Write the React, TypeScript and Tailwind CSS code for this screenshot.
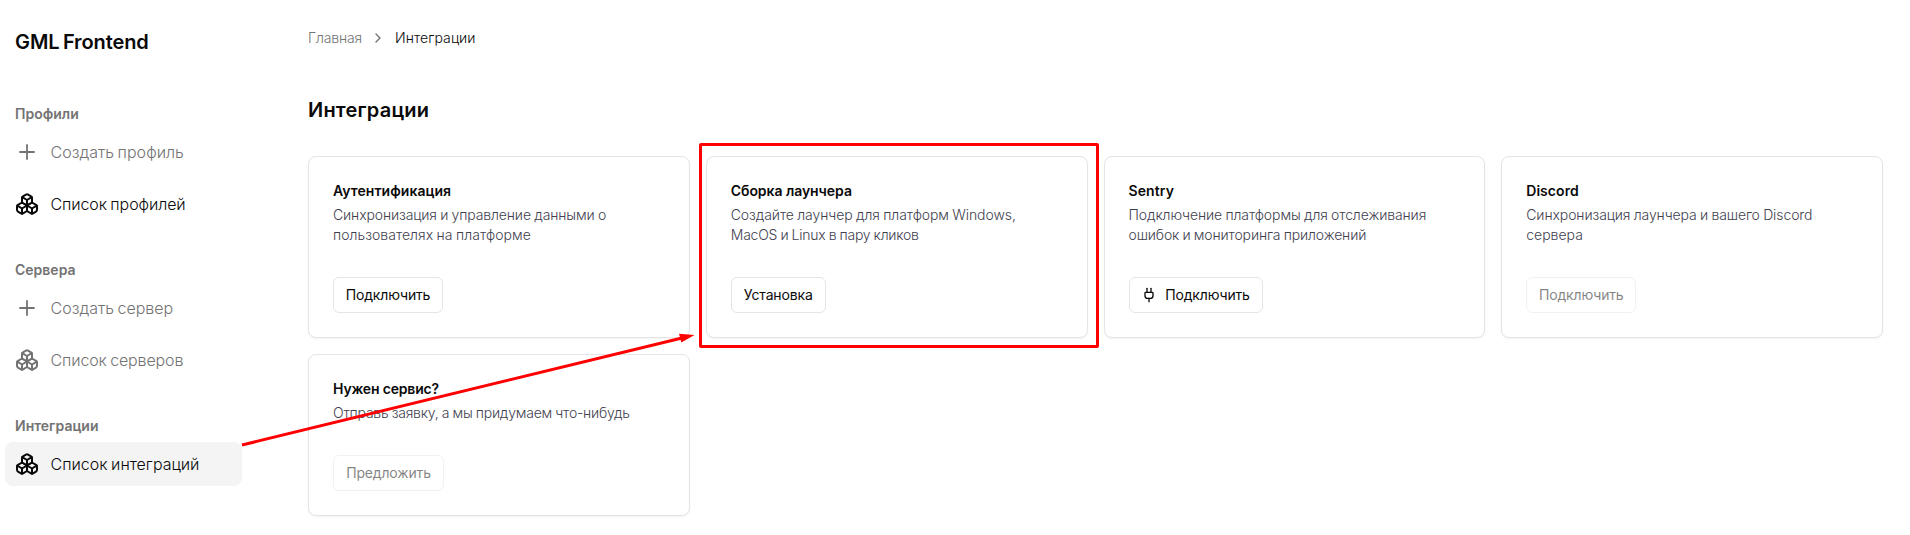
import React from "react";
import { Boxes, ChevronRight, Plug, Plus } from "lucide-react";

type NavItem = { label: string; icon: "plus" | "boxes"; tracking?: string; tone?: "strong" | "muted"; active?: boolean };
type NavGroup = { title: string; items: NavItem[] };

const groups: NavGroup[] = [
  {
    title: "Профили",
    items: [
      { label: "Создать профиль", icon: "plus", tracking: "tracking-[0.02px]" },
      { label: "Список профилей", icon: "boxes", tone: "strong", tracking: "tracking-[-0.1px]" },
    ],
  },
  {
    title: "Сервера",
    items: [
      { label: "Создать сервер", icon: "plus" },
      { label: "Список серверов", icon: "boxes", tracking: "tracking-[-0.13px]" },
    ],
  },
  {
    title: "Интеграции",
    items: [{ label: "Список интеграций", icon: "boxes", tone: "strong", active: true }],
  },
];

type Service = {
  title: string;
  titleClass?: string;
  lines: { text: string; className?: string }[];
  action: string;
  buttonClass: string;
  plug?: boolean;
  disabled?: boolean;
};

const services: Service[] = [
  {
    title: "Аутентификация",
    titleClass: "tracking-[0.05px]",
    lines: [
      { text: "Синхронизация и управление данными о", className: "tracking-[-0.12px]" },
      { text: "пользователях на платформе", className: "tracking-[0.03px]" },
    ],
    action: "Подключить",
    buttonClass: "w-[110px]",
  },
  {
    title: "Сборка лаунчера",
    titleClass: "tracking-[-0.06px]",
    lines: [
      { text: "Создайте лаунчер для платформ Windows,", className: "tracking-[-0.08px]" },
      { text: "MacOS и Linux в пару кликов", className: "tracking-[-0.23px]" },
    ],
    action: "Установка",
    buttonClass: "w-[95px]",
  },
  {
    title: "Sentry",
    titleClass: "tracking-[0.1px]",
    lines: [
      { text: "Подключение платформы для отслеживания", className: "tracking-[-0.11px]" },
      { text: "ошибок и мониторинга приложений", className: "tracking-[-0.14px]" },
    ],
    action: "Подключить",
    buttonClass: "w-[134px]",
    plug: true,
  },
  {
    title: "Discord",
    titleClass: "tracking-[0.05px]",
    lines: [
      { text: "Синхронизация лаунчера и вашего Discord", className: "tracking-[-0.1px]" },
      { text: "сервера" },
    ],
    action: "Подключить",
    buttonClass: "w-[110px]",
    disabled: true,
  },
  {
    title: "Нужен сервис?",
    titleClass: "tracking-[-0.17px]",
    lines: [{ text: "Отправь заявку, а мы придумаем что-нибудь", className: "tracking-[-0.21px]" }],
    action: "Предложить",
    buttonClass: "w-[111px]",
    disabled: true,
  },
];

function SidebarItem({ item }: { item: NavItem }) {
  const Icon = item.icon === "plus" ? Plus : Boxes;
  return (
    <a
      className={`flex h-11 items-center gap-[11.5px] rounded-lg px-2.5 text-base font-light [word-spacing:-1px] ${
        item.tone === "strong" ? "text-[#0a0a0a]" : "text-[#737373]"
      } ${item.active ? "bg-[#f4f4f4]" : ""}`}
    >
      <Icon size={24} strokeWidth={item.icon === "plus" ? 1.8 : 2} />
      <span className={item.tracking ?? ""}>{item.label}</span>
    </a>
  );
}

function ServiceCard({ service }: { service: Service }) {
  return (
    <article className="flex flex-col items-start rounded-lg border border-[#e5e5e5] bg-white p-6 shadow-xs">
      <h2 className={`text-sm font-[580] text-[#0a0a0a] ${service.titleClass ?? ""}`}>{service.title}</h2>
      <p className="mt-1 text-sm font-light whitespace-nowrap text-[#3f3f50] [word-spacing:-0.5px]">
        {service.lines.map((line) => (
          <span key={line.text} className={`block ${line.className ?? ""}`}>
            {line.text}
          </span>
        ))}
      </p>
      <button
        disabled={service.disabled}
        className={`mt-8 flex h-9 items-center justify-center gap-2 rounded-md border border-[#e5e5e5] text-sm font-[370] tracking-[-0.15px] text-[#0a0a0a] disabled:opacity-50 ${service.buttonClass}`}
      >
        {service.plug && <Plug size={16} />}
        {service.action}
      </button>
    </article>
  );
}

export default function App() {
  return (
    <div className="relative flex h-[535px] w-[1910px] overflow-hidden bg-white font-['Inter','Noto_Sans',sans-serif]">
      <aside className="flex w-[247px] shrink-0 flex-col px-[5px] pt-7">
        <div className="px-2.5 text-xl leading-7 font-[580] tracking-[-0.1px] text-[#0a0a0a] [word-spacing:-1.5px]">GML Frontend</div>
        <nav className="mt-12 flex flex-col gap-[34px]">
          {groups.map((group) => (
            <section key={group.title}>
              <h3 className="mb-1.5 px-2.5 text-sm font-[580] text-[#737373]">{group.title}</h3>
              <div className="flex flex-col gap-2">
                {group.items.map((item) => (
                  <SidebarItem key={item.label} item={item} />
                ))}
              </div>
            </section>
          ))}
        </nav>
      </aside>

      <main className="flex-1 pt-7 pr-[27px] pl-[61px]">
        <div className="flex h-5 items-center text-sm font-light">
          <span className="w-[54px] tracking-[-0.15px] text-[#737373]">Главная</span>
          <ChevronRight size={16} className="mx-2 text-[#737373]" />
          <span className="pl-px tracking-[0.08px] text-[#0a0a0a]">Интеграции</span>
        </div>
        <h1 className="mt-12 text-xl leading-7 font-[580] tracking-[0.2px] text-[#0a0a0a]">Интеграции</h1>
        <div className="mt-8 grid grid-cols-4 items-start gap-4">
          {services.map((service) => (
            <ServiceCard key={service.title} service={service} />
          ))}
        </div>
      </main>

      <div className="pointer-events-none absolute top-[143px] left-[699px] h-[205px] w-[400px] rounded-[2px] border-[3px] border-[#ff0000]" />
      <svg className="pointer-events-none absolute inset-0" width="1910" height="535" viewBox="0 0 1910 535" fill="none">
        <path d="M242 445 681 338.2" stroke="#ff0000" strokeWidth="3" />
        <path d="m694.5 335-15.5-1.2 2.3 8.6Z" fill="#ff0000" />
      </svg>
    </div>
  );
}
